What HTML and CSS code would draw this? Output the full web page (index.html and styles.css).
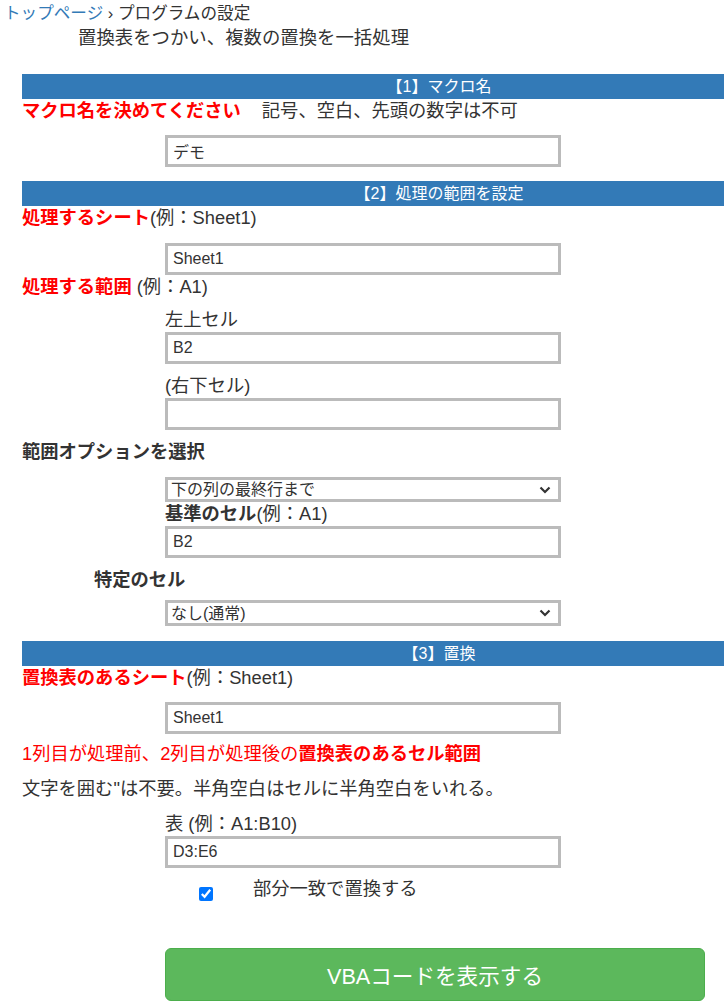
FILE: index.html
```html
<!DOCTYPE html>
<html lang="ja">
<head>
    <meta charset="UTF-8">
    <meta name="viewport" content="width=device-width, initial-scale=1.0">
    <title>置換表で複数置換 - プログラムの設定</title>
    <link rel="stylesheet" href="styles.css">
</head>
<body>
    <p class="crumb"><a href="#">トップページ</a> › プログラムの設定</p>
    <p class="subtitle">置換表をつかい、複数の置換を一括処理</p>

    <form class="setting" onsubmit="return false;">
        <div class="section">
            <div class="bar">【1】マクロ名</div>
            <p class="lead"><b class="red">マクロ名を決めてください</b><span class="note">記号、空白、先頭の数字は不可</span></p>
            <div class="field gap12">
                <input type="text" class="box" value="デモ">
            </div>
        </div>

        <div class="section gap14">
            <div class="bar">【2】処理の範囲を設定</div>
            <p class="lead"><b class="red">処理するシート</b>(例：Sheet1)</p>
            <div class="field gap13">
                <input type="text" class="box" value="Sheet1">
            </div>
            <p class="lead"><b class="red">処理する範囲</b> (例：A1)</p>
            <div class="field gap9">
                <label class="sub">左上セル</label>
                <input type="text" class="box" value="B2">
            </div>
            <div class="field gap10">
                <label class="sub">(右下セル)</label>
                <input type="text" class="box" value="">
            </div>
            <p class="lead strong gap10">範囲オプションを選択</p>
            <div class="field gap13">
                <span class="select-wrap">
                    <select class="box pick">
                        <option>下の列の最終行まで</option>
                        <option>右の行の最終列まで</option>
                        <option>指定した範囲</option>
                    </select>
                    <svg class="chevron" width="12" height="8" viewBox="0 0 12 8"><polyline points="1.5,1.5 6,6 10.5,1.5" fill="none" stroke="#333" stroke-width="2.2"/></svg>
                </span>
                <label class="sub"><b>基準のセル</b>(例：A1)</label>
                <input type="text" class="box" value="B2">
            </div>
            <p class="lead strong indent gap10">特定のセル</p>
            <div class="field gap8">
                <span class="select-wrap">
                    <select class="box pick tall">
                        <option>なし(通常)</option>
                        <option>数式のセル</option>
                        <option>定数のセル</option>
                    </select>
                    <svg class="chevron" width="12" height="8" viewBox="0 0 12 8"><polyline points="1.5,1.5 6,6 10.5,1.5" fill="none" stroke="#333" stroke-width="2.2"/></svg>
                </span>
            </div>
        </div>

        <div class="section gap15">
            <div class="bar">【3】置換</div>
            <p class="lead"><b class="red">置換表のあるシート</b>(例：Sheet1)</p>
            <div class="field gap12">
                <input type="text" class="box" value="Sheet1">
            </div>
            <p class="lead red gap8">1列目が処理前、2列目が処理後の<b>置換表のあるセル範囲</b></p>
            <p class="lead gap11">文字を囲む"は不要。半角空白はセルに半角空白をいれる。</p>
            <div class="field gap11">
                <label class="sub">表 (例：A1:B10)</label>
                <input type="text" class="box" value="D3:E6">
            </div>
            <div class="check gap9">
                <input type="checkbox" id="partial" checked>
                <label for="partial">部分一致で置換する</label>
            </div>
        </div>

        <div class="field action">
            <button type="button" class="show-code">VBAコードを表示する</button>
        </div>
    </form>
</body>
</html>
```

FILE: styles.css
```css
body {
    margin: 0;
    font-family: "Liberation Sans", Arial, "Noto Sans CJK JP", sans-serif;
    color: #333;
    background-color: #fff;
}

p {
    margin: 0;
}

.crumb {
    padding: 2px 0 0 4px;
    font-size: 16.6px;
    line-height: 24px;
}

.crumb a {
    color: #337ab7;
    text-decoration: none;
}

.subtitle {
    padding-left: 78px;
    font-size: 18.4px;
    line-height: 24px;
}

.setting {
    margin: 24px 0 0 22px;
}

.bar {
    height: 25px;
    line-height: 25px;
    padding-left: 132px;
    background-color: #337ab7;
    color: #fff;
    text-align: center;
    font-size: 16px;
}

.lead {
    font-size: 18.3px;
    line-height: 24px;
}

.red {
    color: #f00;
}

.lead .note {
    margin-left: 21px;
}

.strong {
    font-weight: bold;
}

.indent {
    padding-left: 72px;
}

.field {
    display: flex;
    flex-direction: column;
    align-items: flex-start;
    margin-left: 143px;
}

.sub {
    font-size: 18.3px;
    line-height: 24px;
}

.box {
    box-sizing: border-box;
    width: 396px;
    height: 32px;
    margin: 0;
    padding: 0 5px;
    border: 3px solid #bbb;
    border-radius: 0;
    background-color: #fff;
    font-family: "Liberation Sans", Arial, "Noto Sans CJK JP", sans-serif;
    font-size: 16px;
    color: #333;
}

.select-wrap {
    position: relative;
    display: block;
}

.pick {
    display: block;
    height: 25px;
    padding: 0 24px 0 3px;
    appearance: none;
    -webkit-appearance: none;
}

.pick.tall {
    height: 26px;
}

.chevron {
    position: absolute;
    right: 10px;
    top: 50%;
    margin-top: -4px;
    pointer-events: none;
}

.check {
    display: flex;
    align-items: flex-start;
    height: 24px;
    font-size: 18.3px;
    line-height: 24px;
}

.check input {
    width: 14px;
    height: 14px;
    margin: 10px 0 0 177px;
}

.check label {
    margin-left: 40px;
}

.action {
    margin-top: 47px;
}

.show-code {
    width: 540px;
    height: 53px;
    border: 1px solid #4cae4c;
    border-radius: 6px;
    background-color: #5cb85c;
    color: #fff;
    font-family: "Liberation Sans", Arial, "Noto Sans CJK JP", sans-serif;
    font-size: 21.6px;
    cursor: pointer;
}

.gap8 { margin-top: 8px; }
.gap9 { margin-top: 9px; }
.gap10 { margin-top: 10px; }
.gap11 { margin-top: 11px; }
.gap12 { margin-top: 12px; }
.gap13 { margin-top: 13px; }
.gap14 { margin-top: 14px; }
.gap15 { margin-top: 15px; }
```
